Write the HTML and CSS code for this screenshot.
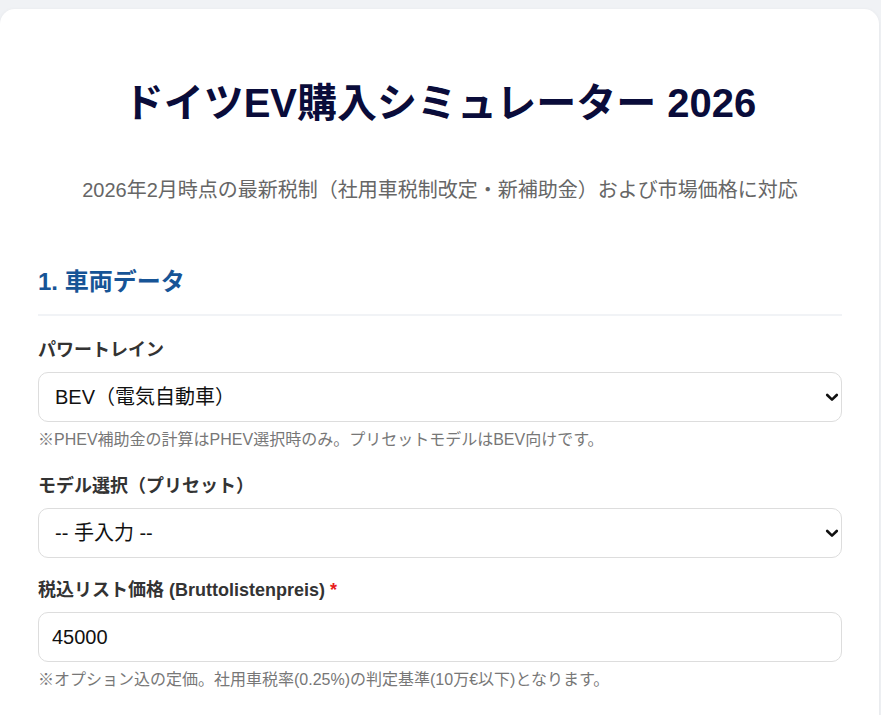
FILE: index.html
```html
<!DOCTYPE html>
<html lang="ja">
<head>
<meta charset="utf-8">
<title>ドイツEV購入シミュレーター 2026</title>
<link rel="stylesheet" href="styles.css">
</head>
<body>
<div class="card">
  <h1 class="title">ドイツEV購入シミュレーター 2026</h1>
  <p class="subtitle">2026年2月時点の最新税制（社用車税制改定・新補助金）および市場価格に対応</p>

  <h2 class="section-title">1. 車両データ</h2>

  <div class="field field-first">
    <label class="label" for="pt">パワートレイン</label>
    <div class="select-wrap">
      <select id="pt" class="control select">
        <option>BEV（電気自動車）</option>
        <option>PHEV（プラグインハイブリッド）</option>
      </select>
      <svg class="chev" width="14" height="9" viewBox="0 0 14 9"><path d="M2.2 2 L7 6.6 L11.8 2" fill="none" stroke="#111" stroke-width="2.6" stroke-linecap="round" stroke-linejoin="round"/></svg>
    </div>
    <p class="hint">※PHEV補助金の計算はPHEV選択時のみ。プリセットモデルはBEV向けです。</p>
  </div>

  <div class="field">
    <label class="label" for="model">モデル選択（プリセット）</label>
    <div class="select-wrap">
      <select id="model" class="control select">
        <option>-- 手入力 --</option>
      </select>
      <svg class="chev" width="14" height="9" viewBox="0 0 14 9"><path d="M2.2 2 L7 6.6 L11.8 2" fill="none" stroke="#111" stroke-width="2.6" stroke-linecap="round" stroke-linejoin="round"/></svg>
    </div>
  </div>

  <div class="field field-tight">
    <label class="label" for="price">税込リスト価格 (Bruttolistenpreis) <span class="req">*</span></label>
    <input id="price" class="control" type="text" value="45000">
    <p class="hint">※オプション込の定価。社用車税率(0.25%)の判定基準(10万€以下)となります。</p>
  </div>
</div>
</body>
</html>
```

FILE: styles.css
```css
html, body {
  margin: 0;
  padding: 0;
  background: #f0f2f5;
}
body {
  font-family: "Liberation Sans", Arial, "Noto Sans CJK JP", sans-serif;
  color: #333;
  padding-top: 9px;
}
.card {
  width: 879px;
  box-sizing: border-box;
  background: #fff;
  border-radius: 15px;
  padding: 32px 37px 40px 38px;
  box-shadow: 0 1px 4px rgba(0,0,0,0.06);
}
.title {
  margin: 38px 0 0;
  font-size: 40px;
  line-height: 48px;
  font-weight: 700;
  color: #0a0c3a;
  text-align: center;
}
.subtitle {
  margin: 48px 0 0;
  font-size: 20px;
  line-height: 30px;
  color: #666;
  text-align: center;
}
.section-title {
  margin: 61px 0 0;
  font-size: 24px;
  line-height: 32px;
  font-weight: 700;
  color: #175496;
  padding-bottom: 16px;
  border-bottom: 2px solid #f1f3f6;
}
.field {
  margin-top: 22px;
}
.field-first {
  padding-bottom: 2px;
}
.field-tight {
  margin-top: 20px;
}
.label {
  display: block;
  font-size: 18px;
  line-height: 24px;
  font-weight: 700;
  color: #333;
  margin-bottom: 10px;
}
.req {
  color: #e81c1c;
}
.control {
  display: block;
  width: 100%;
  height: 50px;
  box-sizing: border-box;
  border: 1px solid #ddd;
  border-radius: 10px;
  background: #fff;
  font-family: "Liberation Sans", Arial, "Noto Sans CJK JP", sans-serif;
  font-size: 20px;
  color: #111;
  padding: 0 12px 0 14px;
  margin: 0;
}
.select {
  appearance: none;
  -webkit-appearance: none;
  padding-left: 16px;
  padding-right: 30px;
}
.select-wrap {
  position: relative;
}
.chev {
  position: absolute;
  right: 3px;
  top: 50%;
  margin-top: -4px;
  pointer-events: none;
}
input.control {
  padding-left: 13px;
}
.hint {
  margin: 8px 0 0;
  font-size: 16px;
  line-height: 20px;
  color: #777;
}
```
